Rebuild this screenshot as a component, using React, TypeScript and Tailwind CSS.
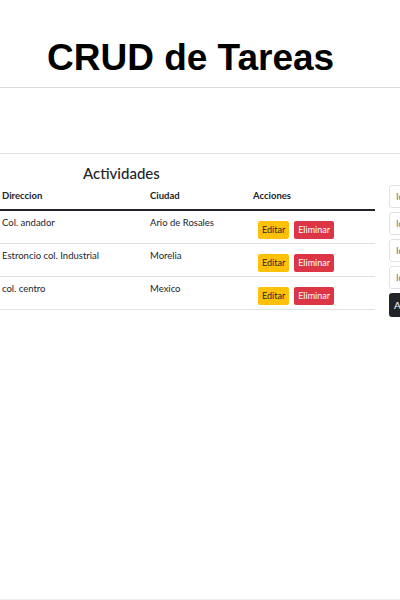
const rows = [
  { direccion: "Col. andador", ciudad: "Ario de Rosales" },
  { direccion: "Estroncio col. Industrial", ciudad: "Morelia" },
  { direccion: "col. centro", ciudad: "Mexico" },
];

const body = "font-['Lato','Noto_Sans',sans-serif]";

export default function App() {
  return (
    <div className="w-[400px] h-[600px] overflow-hidden bg-white flex flex-col">
      {/* Title bar */}
      <header className="h-[88px] shrink-0 border-b border-[#dcdcdc] pl-[47px] pt-[38px]">
        <h1 className="font-['Liberation_Sans',Arial,sans-serif] font-bold text-[37px] leading-[40px] text-black">
          CRUD de Tareas
        </h1>
      </header>

      <div className="h-[66px] shrink-0 border-b border-[#e3e3e3]" />

      <main className={`flex flex-1 gap-[14px] ${body} border-b border-[#f0f0f0]`}>
        <section className="w-[375px] shrink-0">
          <h2 className="pl-[83px] pt-[9px] h-[30px] text-[15px] leading-[20px] font-medium text-[#212529]">
            Actividades
          </h2>
          <table className="w-full text-[9.5px] text-[#212529] border-collapse">
            <thead>
              <tr className="h-[26px] border-b-2 border-[#212529]">
                <th className="w-[150px] pl-[2px] text-left font-bold">Direccion</th>
                <th className="w-[103px] text-left font-bold">Ciudad</th>
                <th className="text-left font-bold">Acciones</th>
              </tr>
            </thead>
            <tbody>
              {rows.map((r) => (
                <tr key={r.direccion} className="h-[33px] border-b border-[#dee2e6]">
                  <td className="pl-[2px] align-top pt-[5px]">{r.direccion}</td>
                  <td className="align-top pt-[5px]">{r.ciudad}</td>
                  <td className="align-top pt-[10px] pl-[5px]">
                    <div className="flex gap-[5px]">
                      <button className="h-[18px] px-[4px] rounded-[2px] bg-[#ffc107] text-[#212529] text-[9px]">
                        Editar
                      </button>
                      <button className="h-[18px] px-[4px] rounded-[2px] bg-[#dc3545] text-white text-[9px]">
                        Eliminar
                      </button>
                    </div>
                  </td>
                </tr>
              ))}
            </tbody>
          </table>
        </section>

        <aside className="flex flex-col gap-[4px] pt-[31px] w-[40px] shrink-0">
          {["Id", "Id", "Id", "Id"].map((p, i) => (
            <input
              key={i}
              placeholder={p}
              className="h-[23px] w-[40px] rounded-[3px] border border-[#dee2e6] px-[6px] text-[9px] placeholder:text-[#6c757d]"
            />
          ))}
          <button className="h-[24px] w-[40px] rounded-[3px] bg-[#212529] text-white text-[10px] text-left pl-[5px] overflow-hidden whitespace-nowrap">
            Agregar
          </button>
        </aside>
      </main>
    </div>
  );
}
